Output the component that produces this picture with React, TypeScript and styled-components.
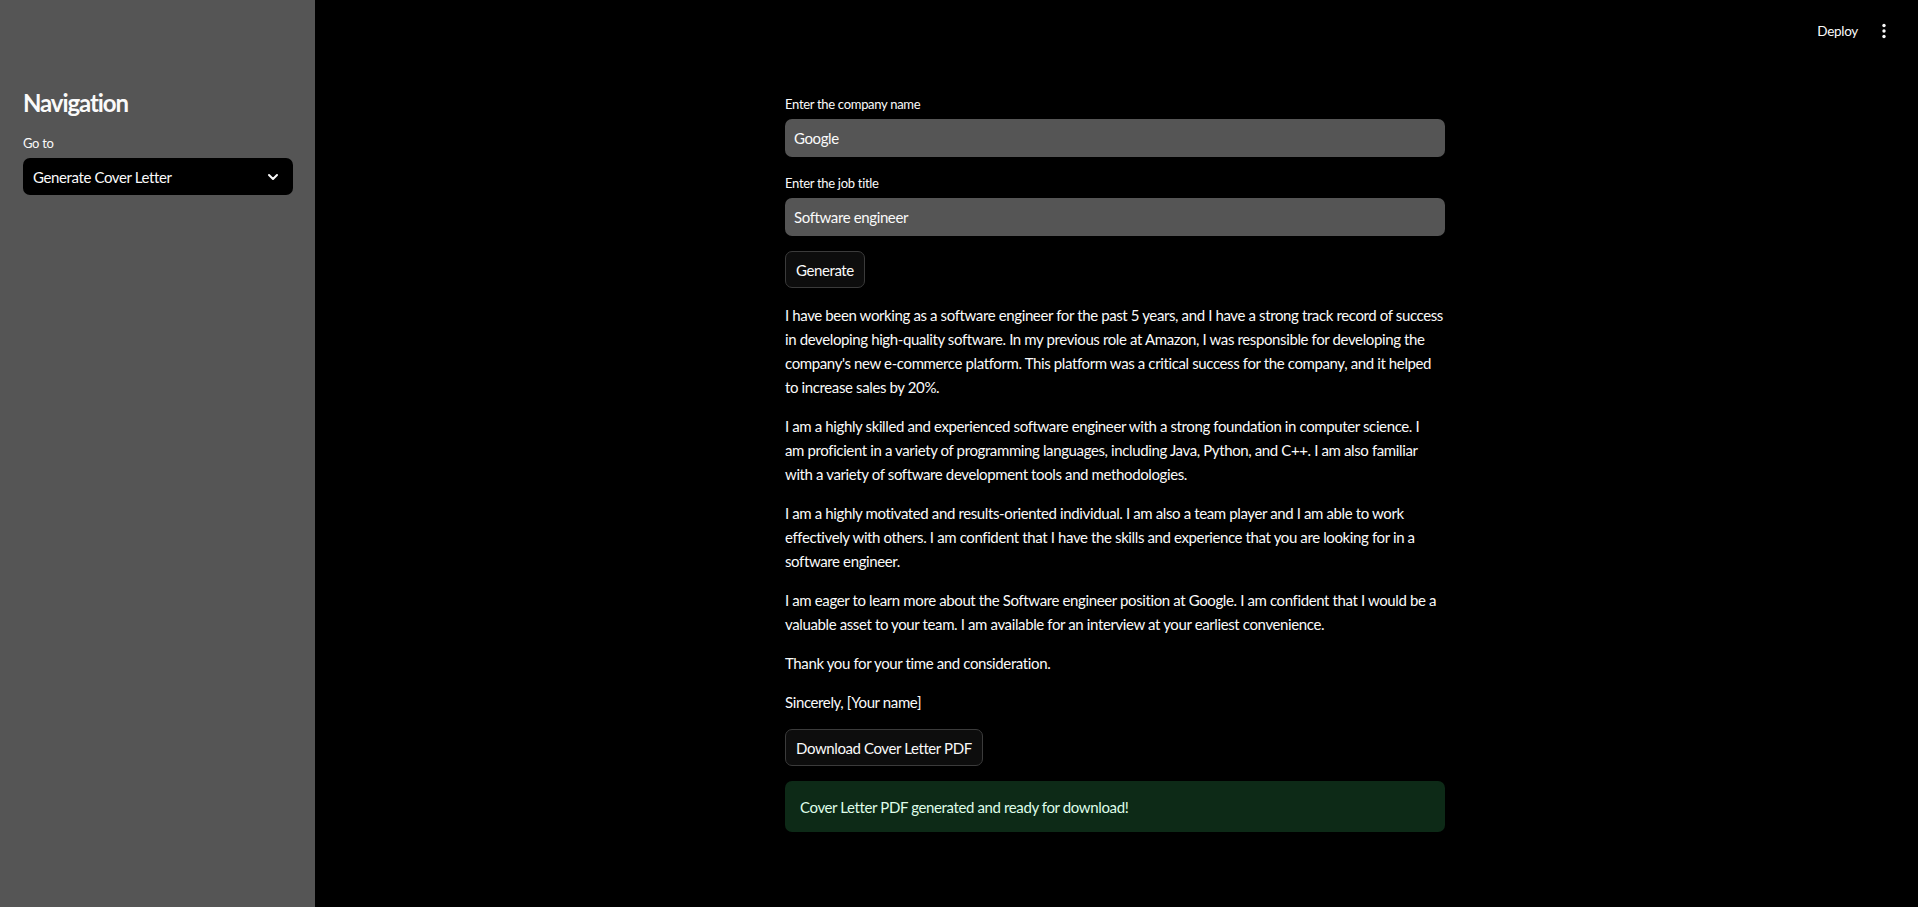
import React from "react";
import styled, { createGlobalStyle } from "styled-components";

const GlobalStyle = createGlobalStyle`
  html, body { margin: 0; padding: 0; background: #000; }
  body {
    font-family: "Lato", "Noto Sans", sans-serif;
    color: #fafafa;
    letter-spacing: -0.38px;
    -webkit-font-smoothing: antialiased;
  }
  * { box-sizing: border-box; }
`;

const Shell = styled.div`
  display: flex;
  height: 100vh;
  overflow: hidden;
`;

const Sidebar = styled.aside`
  width: 315px;
  flex: 0 0 315px;
  background: #555555;
  padding: 88px 22px 0 23px;
  display: flex;
  flex-direction: column;
`;

const SideTitle = styled.h2`
  margin: 0 0 15px;
  font-size: 24px;
  line-height: 29px;
  font-weight: 700;
  letter-spacing: -1.1px;
  color: #fafafa;
`;

const Label = styled.label`
  display: block;
  font-size: 13px;
  line-height: 22px;
  margin-bottom: 4px;
  letter-spacing: -0.3px;
  color: #fafafa;
`;

const SelectBox = styled.div`
  height: 37px;
  background: #000;
  border-radius: 7px;
  display: flex;
  align-items: center;
  justify-content: space-between;
  padding: 0 14px 0 10px;
  font-size: 15px;
  color: #fafafa;
`;

const Main = styled.main`
  flex: 1;
  display: flex;
  flex-direction: column;
  background: #000;
  min-width: 0;
`;

const Header = styled.header`
  height: 62px;
  display: flex;
  align-items: center;
  justify-content: flex-end;
  padding-right: 20px;
  gap: 4px;
`;

const DeployButton = styled.button`
  background: transparent;
  border: none;
  color: #fafafa;
  font-family: inherit;
  font-size: 13.5px;
  letter-spacing: -0.3px;
  padding: 6px 8px;
  cursor: pointer;
`;

const IconButton = styled.button`
  width: 28px;
  height: 28px;
  display: flex;
  align-items: center;
  justify-content: center;
  background: transparent;
  border: none;
  padding: 0;
  cursor: pointer;
`;

const Body = styled.div`
  padding-right: 3px;
`;

const Content = styled.div`
  width: 660px;
  margin: 0 auto;
  padding-top: 31px;
  display: flex;
  flex-direction: column;
  gap: 15px;
`;

const Field = styled.div`
  display: flex;
  flex-direction: column;
`;

const TextInput = styled.div`
  height: 38px;
  background: #555555;
  border-radius: 7px;
  display: flex;
  align-items: center;
  padding: 0 9px;
  font-size: 15px;
  color: #fafafa;
`;

const Button = styled.button`
  align-self: flex-start;
  height: 37px;
  padding: 0 10px;
  background: #0d0d0d;
  border: 1px solid #3b3b3b;
  border-radius: 7px;
  color: #fafafa;
  font-family: inherit;
  font-size: 15px;
  letter-spacing: -0.4px;
  cursor: pointer;
`;

const Paragraph = styled.p`
  margin: 0;
  font-size: 15px;
  line-height: 24px;
  color: #fafafa;
`;

const Line = styled.span`
  display: block;
  white-space: nowrap;
`;

const Success = styled.div`
  height: 51px;
  background: rgb(13, 42, 23);
  border-radius: 7px;
  display: flex;
  align-items: center;
  padding: 0 15px;
  font-size: 15px;
  color: rgb(223, 253, 233);
`;

const paragraphs: string[][] = [
  [
    "I have been working as a software engineer for the past 5 years, and I have a strong track record of success",
    "in developing high-quality software. In my previous role at Amazon, I was responsible for developing the",
    "company's new e-commerce platform. This platform was a critical success for the company, and it helped",
    "to increase sales by 20%.",
  ],
  [
    "I am a highly skilled and experienced software engineer with a strong foundation in computer science. I",
    "am proficient in a variety of programming languages, including Java, Python, and C++. I am also familiar",
    "with a variety of software development tools and methodologies.",
  ],
  [
    "I am a highly motivated and results-oriented individual. I am also a team player and I am able to work",
    "effectively with others. I am confident that I have the skills and experience that you are looking for in a",
    "software engineer.",
  ],
  [
    "I am eager to learn more about the Software engineer position at Google. I am confident that I would be a",
    "valuable asset to your team. I am available for an interview at your earliest convenience.",
  ],
  ["Thank you for your time and consideration."],
  ["Sincerely, [Your name]"],
];

const Chevron = () => (
  <svg width="12" height="8" viewBox="0 0 12 8" fill="none">
    <path d="M2 2l4 4 4-4" stroke="#fafafa" strokeWidth="2" strokeLinecap="round" strokeLinejoin="round" />
  </svg>
);

const Kebab = () => (
  <svg width="4" height="16" viewBox="0 0 4 16">
    <circle cx="2" cy="2.5" r="1.7" fill="#fafafa" />
    <circle cx="2" cy="8" r="1.7" fill="#fafafa" />
    <circle cx="2" cy="13.5" r="1.7" fill="#fafafa" />
  </svg>
);

export default function App() {
  return (
    <>
      <GlobalStyle />
      <Shell>
        <Sidebar>
          <SideTitle>Navigation</SideTitle>
          <Label>Go to</Label>
          <SelectBox>
            <span>Generate Cover Letter</span>
            <Chevron />
          </SelectBox>
        </Sidebar>
        <Main>
          <Header>
            <DeployButton>Deploy</DeployButton>
            <IconButton aria-label="Main menu">
              <Kebab />
            </IconButton>
          </Header>
          <Body>
            <Content>
              <Field>
                <Label>Enter the company name</Label>
                <TextInput>Google</TextInput>
              </Field>
              <Field>
                <Label>Enter the job title</Label>
                <TextInput>Software engineer</TextInput>
              </Field>
              <Button>Generate</Button>
              {paragraphs.map((p, i) => (
                <Paragraph key={i}>
                  {p.map((l, j) => (
                    <Line key={j}>{l}</Line>
                  ))}
                </Paragraph>
              ))}
              <Button>Download Cover Letter PDF</Button>
              <Success>Cover Letter PDF generated and ready for download!</Success>
            </Content>
          </Body>
        </Main>
      </Shell>
    </>
  );
}
